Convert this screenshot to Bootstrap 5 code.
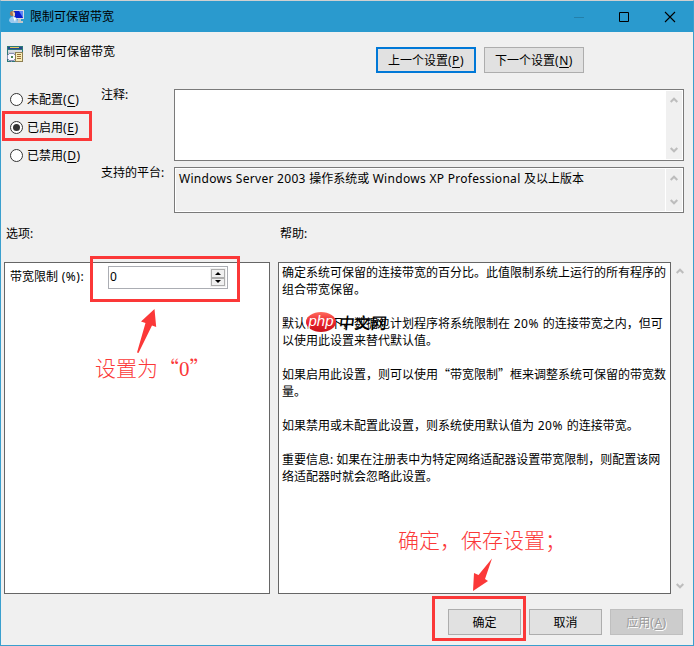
<!DOCTYPE html>
<html lang="zh-CN">
<head>
<meta charset="utf-8">
<meta name="viewport" content="width=device-width, initial-scale=1">
<title>限制可保留带宽</title>
<link href="https://cdn.jsdelivr.net/npm/bootstrap@5.3.0/dist/css/bootstrap.min.css" rel="stylesheet">
<style>
body{width:694px;height:646px;overflow:hidden;font:12px/17px "Noto Sans","Noto Sans CJK SC",sans-serif;color:#000;background:#f0f0f0}
u{text-underline-offset:2px}
.window{height:646px;border:1px solid #3a9fce;border-top-color:#d0d0d0}
.titlebar{height:31px;background:#2a9ace;padding:0 17px 0 8px}
.titlebar .title{margin-left:5px}
.win-ctl{gap:29px}
.win-ctl .max{margin-right:1px;margin-left:-1px}
.head-row{height:57px;padding-left:6px}
.head-row .caption{margin:11px 0 0 8px}
.head-row .icon{margin-top:14px}
.head-btns{margin:15px 109px 0 auto}
.wbtn{--bs-btn-padding-y:0;--bs-btn-padding-x:0;--bs-btn-font-size:12px;--bs-btn-line-height:17px;--bs-btn-border-radius:0;--bs-btn-color:#000;--bs-btn-bg:#e1e1e1;--bs-btn-border-color:#adadad;--bs-btn-disabled-color:#9b9b9b;--bs-btn-disabled-bg:#ccc;--bs-btn-disabled-border-color:#bfbfbf;--bs-btn-disabled-opacity:1;width:73px;height:26px}
.wbtn.wide{width:100px}
.wbtn.focused{border:2px solid #0078d7}
.wbtn:disabled{text-shadow:1px 1px #fff}
.radios{width:99px;padding-left:9px}
.radios label{height:28px;line-height:28px;gap:4px}
.radios label:first-child{margin-top:-4px}
.radios label span{padding-top:1px}
.labels{width:74px;padding-left:1px}
.labels .l1{height:78px;margin-top:-3px}
.radio-dot{width:13px;height:13px;border:1px solid #333;border-radius:50%;background:#fff}
.radio-dot.on::after{content:"";display:block;width:7px;height:7px;margin:2px;border-radius:50%;background:#333}
.field{border:1px solid #7a7a7a;width:510px;padding:1px}
.field .bar{width:16px;background:#f0f0f0;padding:6px 4px}
.comment{height:72px;background:#fff}
.platform{height:46px;margin-top:6px}
.platform .inner{border:1px solid #fff;margin:-1px;padding:0}
.platform .txt{padding:1px 0 0 3px;border-right:1px solid #fff}
.lat{letter-spacing:.3px}
.pct,.key{letter-spacing:.55px}
.sect-labels{height:49px;padding:12px 0 0 5px}
.sect-labels .first{width:274px}
.panel{border:1px solid #666;background:#fff;height:332px}
.options{width:266px;margin-left:3px;padding:3px 0 0 5px}
.options .name{width:98px;padding-top:2px}
.spin{width:120px;height:23px;border:1px solid #abadb3;padding:1px 1px 1px 1px}
.spin .arrows{width:16px;background:#f0f0f0;padding:1px}
.spin .arrows span{height:9px;border:1px solid #adadad;background:#f0f0f0}
.help{width:393px;margin-left:8px;padding:1px 0 0 3px;white-space:nowrap}
.help p{margin:0 0 17px}
.cj{font-family:"Noto Sans CJK SC",sans-serif;line-height:1}
.help-bar{width:20px;padding:6px 0 5px 5px}
.foot{padding:15px 10px 0 0;gap:8px}
.overlay{left:0;top:0;pointer-events:none}
.note{font:300 21px/24px "Noto Sans CJK SC",sans-serif;color:#fb3838;white-space:nowrap}
.note .zero{font-family:"Liberation Serif",serif}
.note-a{left:95px;top:355px}
.note-b{left:398px;top:527px}
.stamp{left:306px;top:312px;height:20px}
.stamp-oval{width:30px;height:20px;border-radius:50%;background:linear-gradient(#ff6a5c,#e8202a 55%,#c9151c);color:#fff;font:italic 400 15px/17px "Liberation Sans",sans-serif;text-align:center}
.stamp-name{font:500 16px/20px "Noto Sans CJK SC",sans-serif;color:#000;transform:skewX(-6deg);margin-left:3px}
</style>
<script src="https://cdn.jsdelivr.net/npm/bootstrap@5.3.0/dist/js/bootstrap.bundle.min.js"></script>
</head>
<body class="position-relative">
<svg class="d-none">
  <symbol id="up" viewBox="0 0 8 6"><path d="M.7 5 4 1.7 7.3 5" fill="none" stroke="#bdbdbd" stroke-width="2"/></symbol>
  <symbol id="down" viewBox="0 0 8 6"><path d="M.7 1 4 4.3 7.3 1" fill="none" stroke="#bdbdbd" stroke-width="2"/></symbol>
</svg>
<main class="window d-flex flex-column">
  <header class="titlebar d-flex align-items-center">
    <svg width="16" height="16" viewBox="0 0 16 16">
      <path d="M4 1h11v9H4z" fill="#d8dbe0"/><path d="M5 2h9v7H5z" fill="#0a1ccc"/><path d="M10 2h4v7z" fill="#5c86f5"/><path d="M9 10h3v2h2v2H8z" fill="#c3c7c9"/>
      <circle cx="3.5" cy="4.5" r="2.6" fill="#a87850"/><path d="M3.5 2.5 6 4v3L4.5 8z" fill="#eed1af"/><path d="M0 12c0-3 2-4.500 4-4.500S9 9 9 14H2z" fill="#9bc9ee"/><path d="m4 8 2 5 1-4z" fill="#fff"/>
    </svg>
    <span class="title">限制可保留带宽</span>
    <div class="win-ctl d-flex align-items-center ms-auto">
      <svg width="16" height="12"><path d="M0 6.500h10" stroke="#2380ab"/></svg>
      <svg class="max" width="12" height="12"><path d="M1.500 1.500h9v9h-9z" fill="none" stroke="#000"/></svg>
      <svg width="16" height="12" viewBox="-2 0 16 12"><path d="m3 1 10 10M13 1 3 11" stroke="#000" stroke-width="1.100"/></svg>
    </div>
  </header>
  <section class="head-row d-flex">
    <svg class="icon" width="16" height="16" viewBox="0 0 16 16" shape-rendering="crispEdges">
      <path d="M0 0h16v16H0z" fill="#2c7878"/><path d="M1 1h14v2H1z" fill="#29478f"/><path d="M3 1h9v1H3z" fill="#e8c95e"/><path d="M1 4h14v3H1z" fill="#d9dde2"/><path d="M1 6h8v9H1z" fill="#c8ccd2"/><circle cx="4.500" cy="11" r="4" fill="#f8f8ff" stroke="#8a8fb5"/><path d="M4 10h2v2H4z" fill="#4c8455"/><path d="M8 6h7v9H8z" fill="#f8edb5" stroke="#8d7e52"/><path d="M10 8h4M10 10h4M10 12h4" stroke="#9a6f3a"/>
    </svg>
    <span class="caption">限制可保留带宽</span>
    <div class="head-btns d-flex gap-2">
      <button class="btn wbtn wide focused">上一个设置<span class="key">(<u>P</u>)</span></button>
      <button class="btn wbtn wide">下一个设置<span class="key">(<u>N</u>)</span></button>
    </div>
  </section>
  <section class="d-flex">
    <div class="radios d-flex flex-column">
      <label class="d-flex align-items-center"><i class="radio-dot"></i><span>未配置<span class="key">(<u>C</u>)</span></span></label>
      <label class="d-flex align-items-center"><i class="radio-dot on"></i><span>已启用<span class="key">(<u>E</u>)</span></span></label>
      <label class="d-flex align-items-center"><i class="radio-dot"></i><span>已禁用<span class="key">(<u>D</u>)</span></span></label>
    </div>
    <div class="labels"><div class="l1">注释:</div><div>支持的平台:</div></div>
    <div>
      <div class="field comment d-flex"><div class="bar ms-auto me-0 d-flex flex-column justify-content-between"><svg width="8" height="6"><use href="#up"/></svg><svg width="8" height="6"><use href="#down"/></svg></div></div>
      <div class="field platform d-flex"><div class="inner d-flex flex-fill"><div class="txt flex-fill"><span class="lat">Windows Server 2003 </span>操作系统或<span class="lat"> Windows XP Professional </span>及以上版本</div><div class="bar d-flex flex-column justify-content-between"><svg width="8" height="6"><use href="#up"/></svg><svg width="8" height="6"><use href="#down"/></svg></div></div></div>
    </div>
  </section>
  <div class="sect-labels d-flex"><span class="first">选项:</span><span>帮助:</span></div>
  <section class="d-flex">
    <div class="panel options d-flex align-items-start">
      <span class="name">带宽限制<span class="pct"> (%):</span></span>
      <div class="spin d-flex"><span class="flex-fill">0</span>
        <div class="arrows d-flex flex-column">
          <span class="d-flex align-items-center justify-content-center"><svg width="6" height="3"><path d="M0 3 3 0l3 3z"/></svg></span>
          <span class="d-flex align-items-center justify-content-center"><svg width="6" height="3"><path d="m0 0 3 3 3-3z"/></svg></span>
        </div>
      </div>
    </div>
    <article class="panel help">
      <p>确定系统可保留的连接带宽的百分比。此值限制系统上运行的所有程序的<br>组合带宽保留。</p>
      <p>默认情况下，数据包计划程序将系统限制在<span class="pct"> 20% </span>的连接带宽之内，但可<br>以使用此设置来替代默认值。</p>
      <p>如果启用此设置，则可以使用<span class="cj">“</span>带宽限制<span class="cj">”</span>框来调整系统可保留的带宽数<br>量。</p>
      <p>如果禁用或未配置此设置，则系统使用默认值为<span class="pct"> 20% </span>的连接带宽。</p>
      <p>重要信息: 如果在注册表中为特定网络适配器设置带宽限制，则配置该网<br>络适配器时就会忽略此设置。</p>
    </article>
    <div class="help-bar d-flex flex-column justify-content-between"><svg width="8" height="6"><use href="#up"/></svg><svg width="8" height="6"><use href="#down"/></svg></div>
  </section>
  <footer class="foot d-flex justify-content-end">
    <button class="btn wbtn">确定</button>
    <button class="btn wbtn">取消</button>
    <button class="btn wbtn" disabled>应用<span class="key">(<u>A</u>)</span></button>
  </footer>
</main>
<svg class="overlay position-absolute" width="694" height="646">
  <g fill="none" stroke="#fb3838" stroke-width="3"><path d="M3.500 112.500h87v27h-87zM91.500 257.500h147v43h-147zM433.500 597.500h91v42h-91z"/></g>
  <path d="M154.500 309 156.200 327 152 325.500 138.500 353 137 352.500 145.500 323 141 321.500zM473 591l1-18 4.500 2 13.500-16.500-7 20.500 3 2z" fill="#fb3838"/>
</svg>
<div class="note note-a position-absolute">设置为“<span class="zero">0</span>”</div>
<div class="note note-b position-absolute">确定，保存设置；</div>
<div class="stamp position-absolute d-flex"><span class="stamp-oval">php</span><span class="stamp-name">中文网</span></div>
</body>
</html>
